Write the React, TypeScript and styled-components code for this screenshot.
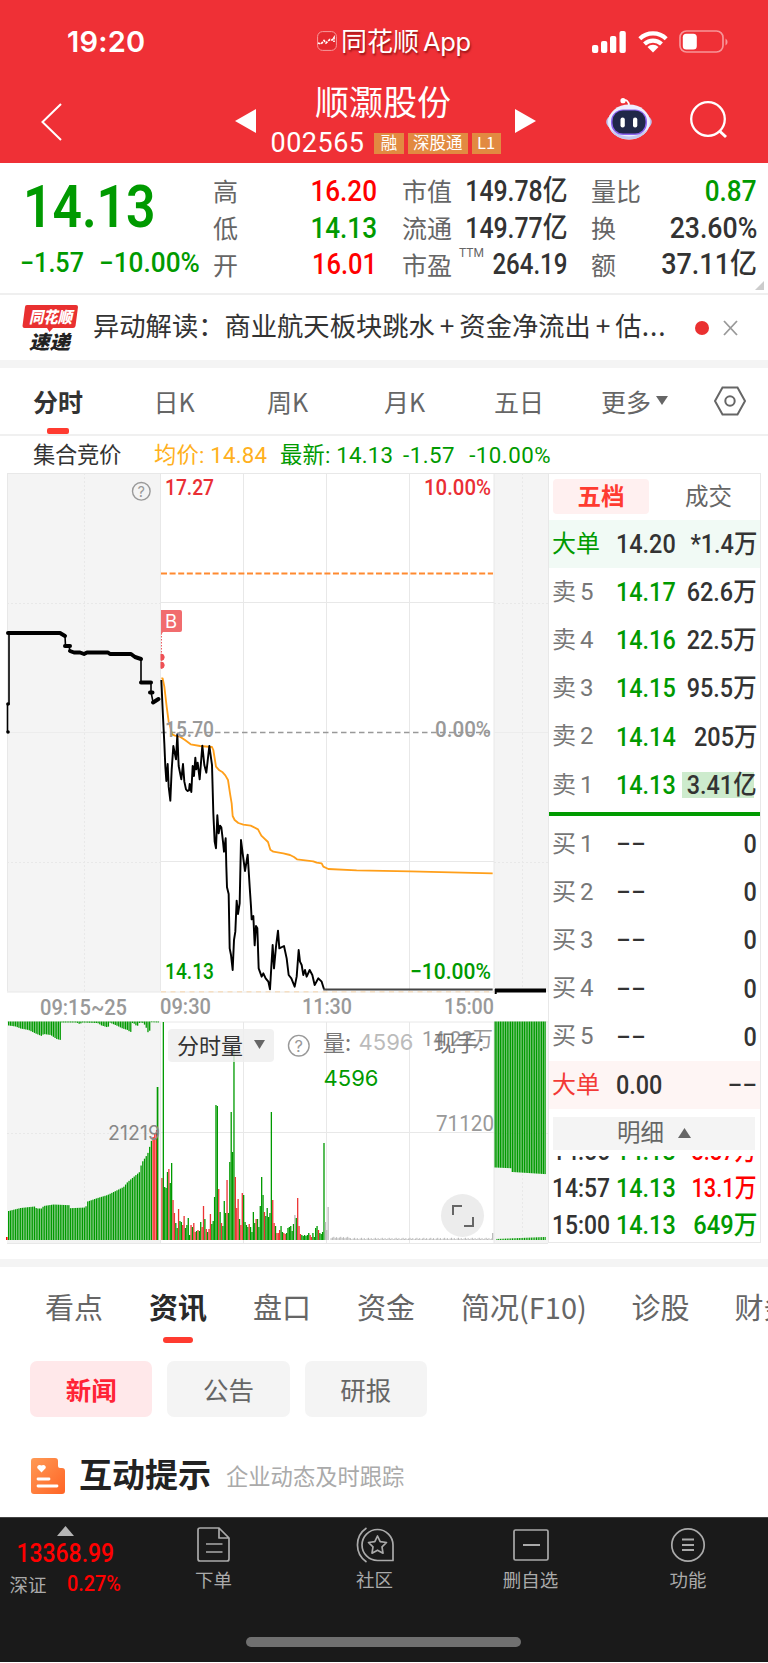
import React from "react";
import styled, { createGlobalStyle } from "styled-components";

const GREEN = "#009a00";
const RED = "#ff0000";
const SANS = `Roboto, "Noto Sans CJK SC", sans-serif`;
const CJK = `"Noto Sans CJK SC", sans-serif`;

const Global = createGlobalStyle`
  * { box-sizing: border-box; }
  body { margin: 0; background: #fff; font-family: ${CJK}; color: #333; }
`;

const Page = styled.div`
  width: 768px;
  height: 1663px;
  overflow: hidden;
  display: flex;
  flex-direction: column;
  background: #fff;
  white-space: nowrap;
`;

/* Condensed numerals */
const Num = styled.span<{ $size: number; $c?: string; $w?: number; $sx?: number; $o?: string }>`
  display: inline-block;
  font-family: ${SANS};
  font-size: ${(p) => p.$size}px;
  font-weight: ${(p) => p.$w ?? 500};
  line-height: 1.17;
  color: ${(p) => p.$c ?? "#333"};
  transform: scaleX(${(p) => p.$sx ?? 0.9});
  transform-origin: ${(p) => p.$o ?? "left"} center;
`;

/* ---------- Header ---------- */
const Header = styled.header`
  height: 163px;
  flex: none;
  background: #ef3036;
  color: #fff;
`;
const StatusBar = styled.div`
  height: 82px;
  display: grid;
  grid-template-columns: 317px 274px 1fr;
  padding-top: 2px;
  align-items: center;
`;
const Clock = styled.div`
  padding-left: 67px;
  font: 600 29px/34px Inter, sans-serif;
  letter-spacing: 0.2px;
`;
const AppName = styled.div`
  display: flex;
  align-items: center;
  gap: 4px;
  font-family: ${CJK};
  font-size: 26px;
  line-height: 34px;
  text-shadow: 1px 2px 2px rgba(90, 0, 0, 0.6);
  margin-top: -2px;
`;
const Latin = styled.span`
  margin-left: 4px;
  font-family: Inter, sans-serif;
  font-size: 25.5px;
  letter-spacing: -0.3px;
`;
const TitleBar = styled.div`
  height: 81px;
  display: grid;
  grid-template-columns: 235px 302px 1fr;
`;
const BackBox = styled.div`padding: 21px 0 0 41px;`;
const StockBox = styled.div`
  display: grid;
  grid-template-columns: 21px 1fr 22px;
  > svg { margin-top: 27px; }
`;
const StockTitle = styled.div`
  display: flex;
  flex-direction: column;
  align-items: center;
`;
const StockName = styled.div`
  margin: 0 0 0 -5px;
  font-size: 34px;
  line-height: 38px;
  font-weight: 400;
`;
const CodeLine = styled.div`
  display: flex;
  align-items: center;
  gap: 4px;
  margin-top: 12px;
  height: 22px;
  width: 230px;
`;
const Code = styled.span`
  font: 400 27px/24px Roboto, sans-serif;
  letter-spacing: 0.5px;
  width: 100px;
`;
const Tag = styled.span<{ $w: number }>`
  width: ${(p) => p.$w}px;
  height: 21px;
  background: #e28a41;
  text-align: center;
  font-size: 16.5px;
  line-height: 19px;
`;
const HeaderTools = styled.div`
  display: flex;
  gap: 37px;
  padding: 15px 0 0 68px;
`;

/* ---------- Quote ---------- */
const Quote = styled.section`
  height: 132px;
  flex: none;
  display: grid;
  grid-template-columns: 214px 163px 163px 163px;
  border-bottom: 2px solid #efefef;
  position: relative;
`;
const PriceBox = styled.div`
  padding-left: 23px;
`;
const BigPrice = styled.div`
  height: 70px;
  margin-top: 9px;
`;
const ChangeRow = styled.div`
  display: grid;
  grid-template-columns: 79px 1fr;
  margin: 6px 0 0 -3px;
`;
const StatCol = styled.div<{ $l: number; $w: number }>`
  margin-left: ${(p) => p.$l}px;
  width: ${(p) => p.$w}px;
  padding-top: 10px;
`;
const StatRow = styled.div`
  height: 36.7px;
  display: flex;
  align-items: center;
  justify-content: space-between;
  > :last-child { margin: 1px 0 0 -30px; }
`;
const StatLabel = styled.span`
  font-size: 25px;
  line-height: 36px;
  color: #666;
  position: relative;
  top: -1px;
  left: -1px;
  sup {
    position: absolute;
    left: 57px;
    top: 0;
    font: 400 12px/14px Roboto, sans-serif;
  }
`;
const Corner = styled.i`
  position: absolute;
  right: 4px;
  bottom: 3px;
  border-left: 9px solid transparent;
  border-bottom: 9px solid #ccc;
`;

/* ---------- News strip ---------- */
const NewsStrip = styled.section`
  height: 73px;
  flex: none;
  border-bottom: 8px solid #f4f4f4;
  display: flex;
  align-items: center;
  padding-left: 22px;
`;
const NewsText = styled.div`
  width: 572px;
  margin: -5px 0 0 15px;
  font-size: 26.3px;
  line-height: 40px;
`;
const PlusSign = styled.span`
  display: inline-block;
  width: 24.5px;
  text-align: center;
`;
const Dots = styled.span`
  letter-spacing: 1px;
`;
const Dot = styled.i`
  width: 14px;
  height: 14px;
  margin: 0 14px 0 30px;
  border-radius: 50%;
  background: #ea3030;
`;

/* ---------- Period tabs ---------- */
const PeriodTabs = styled.nav`
  height: 68px;
  flex: none;
  display: grid;
  grid-template-columns: 120.5px 113.5px 117px 110px 107px 112.5px 1fr;
  padding-left: 33px;
  border-bottom: 2px solid #f0f0f0;
`;
const PeriodTab = styled.div<{ $on?: boolean }>`
  position: relative;
  display: flex;
  align-items: center;
  height: 66px;
  font-size: 25px;
  line-height: 36px;
  padding-bottom: 1px;
  font-weight: ${(p) => (p.$on ? 700 : 400)};
  color: ${(p) => (p.$on ? "#333" : "#666")};
  &::after {
    content: ${(p) => (p.$on ? '""' : "none")};
    position: absolute;
    left: 14px;
    bottom: 0;
    width: 22px;
    height: 6px;
    border-radius: 2px;
    background: #ff3b30;
  }
`;
const MoreTab = styled(PeriodTab)`
  gap: 5px;
`;
const Legend = styled.div`
  height: 37px;
  flex: none;
  display: grid;
  grid-template-columns: 121px 126px 109px 1fr;
  padding: 1px 0 0 33px;
  font-family: ${SANS};
  font-size: 22.3px;
  line-height: 36px;
`;
const LegendItem = styled.span<{ $c?: string; $ls?: number }>`
  color: ${(p) => p.$c ?? "#333"};
  letter-spacing: ${(p) => p.$ls ?? 0.2}px;
`;
const Gap = styled.span`margin-left: 14px;`;

/* ---------- Market area ---------- */
const Market = styled.section`
  height: 794px;
  flex: none;
  display: grid;
  grid-template-columns: 548px 213px;
  border-bottom: 8px solid #f4f4f4;
`;
const ChartBox = styled.div`
  position: relative;
  height: 786px;
  svg { display: block; }
`;
const IndicatorMenu = styled.div`
  position: absolute;
  left: 168px;
  top: 556px;
  width: 106px;
  height: 33px;
  border-radius: 4px;
  background: rgba(238, 238, 238, 0.8);
  display: flex;
  align-items: center;
  gap: 11px;
  padding: 0 0 3px 9px;
  font-size: 22px;
  line-height: 30px;
`;
const ExpandButton = styled.div`
  position: absolute;
  left: 441px;
  top: 721px;
  width: 43px;
  height: 43px;
  border-radius: 50%;
  background: #ececec;
  display: grid;
  place-items: center;
`;

/* ---------- Order book ---------- */
const Book = styled.aside`
  height: 770px;
  border: 1px solid #e8e8e8;
  padding: 5px 0 0;
`;
const BookTabs = styled.div`
  display: grid;
  grid-template-columns: 96px 119px;
  margin-left: 4px;
  height: 41px;
`;
const BookTab = styled.div<{ $on?: boolean }>`
  height: 35px;
  border-radius: 4px;
  text-align: center;
  font-size: 23.5px;
  line-height: 32px;
  font-weight: ${(p) => (p.$on ? 700 : 400)};
  color: ${(p) => (p.$on ? "#ff3b30" : "#666")};
  background: ${(p) => (p.$on ? "#fff0f0" : "transparent")};
`;
const BookRow = styled.div<{ $bg?: string }>`
  height: 48.2px;
  display: grid;
  grid-template-columns: 64px 62px 1fr;
  align-items: center;
  padding: 0 3px;
  background: ${(p) => p.$bg ?? "transparent"};
  > :last-child { justify-self: end; }
`;
const BookLabel = styled.span<{ $c?: string }>`
  font-family: ${SANS};
  font-size: 24px;
  line-height: 34px;
  padding-bottom: 1px;
  color: ${(p) => p.$c ?? "#777"};
  word-spacing: -2px;
`;
const Amount = styled.span<{ $hot?: boolean }>`
  height: 26px;
  width: 75px;
  display: flex;
  align-items: center;
  justify-content: flex-end;
  background: ${(p) => (p.$hot ? "linear-gradient(to right, #cdebcd 72px, transparent 72px)" : "none")};
`;
const Divider = styled.div`
  height: 4px;
  margin: 3px 0 4px;
  background: ${GREEN};
`;
const DetailBar = styled.div`
  height: 33px;
  margin: 8px 5px 6px 4px;
  padding-bottom: 4px;
  background: #f4f4f4;
  display: flex;
  align-items: center;
  justify-content: center;
  gap: 14px;
  font-size: 23.5px;
  line-height: 29px;
  color: #666;
  svg { margin-top: 3px; }
`;
const Trades = styled.div`
  height: 89px;
  overflow: hidden;
  display: flex;
  flex-direction: column;
  justify-content: flex-end;
  padding-bottom: 1.5px;
`;
const TradeRow = styled.div`
  height: 37px;
  flex: none;
  display: grid;
  grid-template-columns: 64px 62px 1fr;
  align-items: center;
  padding: 0 3px;
  > :last-child { justify-self: end; }
`;

/* ---------- Content tabs ---------- */
const ContentTabs = styled.nav`
  height: 94px;
  flex: none;
  display: grid;
  grid-template-columns: 104px 104px 104px 104px 170.5px 103px 1fr;
  padding-left: 45px;
`;
const ContentTab = styled.div<{ $on?: boolean }>`
  position: relative;
  font-size: 29px;
  line-height: 40px;
  padding-top: 19px;
  font-weight: ${(p) => (p.$on ? 700 : 400)};
  color: ${(p) => (p.$on ? "#2a2a2a" : "#666")};
  &::after {
    content: ${(p) => (p.$on ? '""' : "none")};
    position: absolute;
    left: 18px;
    top: 70px;
    width: 30px;
    height: 6px;
    border-radius: 3px;
    background: #ff3b30;
    transform: translateX(-4px);
  }
`;
const Chips = styled.div`
  display: flex;
  gap: 15px;
  padding-left: 30px;
  height: 56px;
  flex: none;
`;
const Chip = styled.div<{ $on?: boolean }>`
  width: 122.3px;
  height: 56px;
  border-radius: 7px;
  text-align: center;
  font-size: 25.5px;
  line-height: 55px;
  font-weight: ${(p) => (p.$on ? 700 : 400)};
  color: ${(p) => (p.$on ? "#ff2436" : "#666")};
  background: ${(p) => (p.$on ? "#ffe8ea" : "#f4f4f4")};
`;
const Section = styled.section`
  flex: 1;
  display: flex;
  align-items: flex-start;
  padding: 41px 0 0 31px;
`;
const SectionTitle = styled.h2`
  margin: -8px 0 0 14px;
  font-size: 33px;
  line-height: 46px;
  font-weight: 700;
  color: #222;
`;
const SectionNote = styled.span`
  margin-left: 15px;
  font-size: 22.3px;
  line-height: 35px;
  color: #aaa;
`;

/* ---------- Bottom bar ---------- */
const BottomBar = styled.footer`
  height: 145px;
  flex: none;
  margin-bottom: 1px;
  background: #1a1a1a;
  border-top: 1px solid #444;
  display: grid;
  grid-template-columns: 130px 167px 155px 157px 158px;
  grid-template-rows: 119px 1fr;
`;
const IndexBox = styled.div`
  padding-top: 8px;
  display: flex;
  flex-direction: column;
  align-items: center;
`;
const IndexValue = styled.div`
  height: 31px;
  margin-top: 3px;
  font-size: 0;
`;
const IndexLine = styled.div`
  display: flex;
  width: 111px;
  align-items: center;
  justify-content: space-between;
  height: 28px;
  font-size: 18.5px;
  color: #aaa;
`;
const NavItem = styled.div`
  display: flex;
  flex-direction: column;
  align-items: center;
  padding-top: 8px;
  gap: 2px;
  font-size: 18.5px;
  line-height: 26px;
  color: #aaa;
`;
const HomeIndicator = styled.i`
  grid-column: 1 / -1;
  justify-self: center;
  width: 275px;
  height: 10px;
  border-radius: 5px;
  background: #707070;
`;

/* ---------- Chart data ---------- */
const BASE = 1240;

const interp = (pts: number[][], x: number) => {
  for (let i = 1; i < pts.length; i++) {
    if (x <= pts[i][0]) {
      const [x0, y0] = pts[i - 1];
      const [x1, y1] = pts[i];
      return y0 + ((y1 - y0) * (x - x0)) / (x1 - x0);
    }
  }
  return pts[pts.length - 1][1];
};

const auctionProfile = [
  [8, 29], [20, 32], [34, 33.5], [36, 31.5], [41, 31.5], [43, 34], [53, 35.5], [68.5, 34.8], [69.5, 31.8],
  [85, 32.5], [87, 38.5], [97, 42], [107, 45], [123, 53], [127, 58], [139, 68], [141, 77], [147, 86], [151, 100], [156, 110],
];
const topProfile = [
  [8, 4], [15, 5], [20, 7], [28, 8.5], [35, 12], [41, 14.5], [43, 12.5], [50, 13.5], [56, 17.5], [60, 18.5],
  [61, 1], [76, 1], [79, 2.5], [82, 1], [97, 1.5], [101, 4], [107.5, 6], [109, 1], [117, 4.5], [122, 7],
  [127, 8.5], [130, 11], [132, 0.7], [136.5, 5], [139, 1], [143, 1.5], [146, 7], [148.5, 14], [150, 0.7], [159, 1],
];

const volumes =
  "62r 218g 53g 52g 68g 71r 57g 77g 40r 27r 17g 12g 31r 19g 18g 15r 24r 12g 15g 22g 5g 15r 13g 17r 8r 9g 10r 9g 18g 13r 34r 21g 11r 8g 11r 26r 16g 19g 43g 135g 134g 51r 28g 17r 14g 39g 27g 60r 27g 78g 128g 88g 193g 63r 32r 41r 21g 15r 47r 45g 18g 15g 13g 16r 13g 8g 28g 17g 21r 21g 13g 34g 63g 45g 28r 24g 32g 23g 27g 128g 40r 17r 14g 7r 7r 10r 14g 8g 7r 6r 7g 12g 13g 14g 9g 16g 25n 22g 42r 14r 6r 5g 4g 5g 4g 5g 7g 5r 3r 7g 3g 12g 14g 10r 7g 6g 8g 97g 18n 10n 33n"
    .split(" ")
    .map((s) => ({ h: parseInt(s, 10), c: s[s.length - 1] }));
const tone: Record<string, string> = { r: "#ec3434", g: GREEN, n: "#bbb" };

const priceLine =
  "34,240 38,330 43,430 46,500 49,543 53,492 56,560 61,602 65,510 70,438 78,478 82,403 86,498 94,538 99,492 103,545 108,568 113,573 117,571 119,552 124,576 128,498 132,528 136,473 139,508 143,488 149,538 157,437 163,495 169,518 178,438 186,495 190,640 194,725 198,745 202,646 206,700 210,677 214,682 219,725 222,755 227,715 229,800 231,862 236,882 239,1045 243,1065 248,1110 252,1020 256,995 260,902 264,942 269,910 273,720 278,760 285,813 293,764 299,860 303,920 305,958 310,948 314,1036 318,978 322,985 326,1105 335,1130 340,1120 347,1135 355,1145 360,1168 364,1100 368,1035 372,1105 378,1040 384,992 388,1045 402,1038 410,1075 416,1125 424,1135 434,1160 440,1130 446,1050 450,1085 455,1095 460,1125 465,1110 470,1130 479,1110 487,1125 494,1155 505,1135 515,1145 522,1168";
const averageLine =
  "34,235 38,235 43,260 50,320 56,365 62,385 66,403 75,407 90,410 105,420 122,433 150,438 186,441 190,450 198,500 208,511 218,517 226,526 234,540 240,580 245,610 248,648 254,660 265,669 280,674 302,677 324,688 334,707 354,726 361,749 370,755 400,760 420,765 432,771 441,778 490,784 500,788 515,790 520,800 535,807 620,811 780,814 1028,820";

const auctionBars = Array.from({ length: 87 }, (_, i) => 8 + i * 1.72).filter((x) => x < 156);

const AxisText = ({ x, y, w, c, s = 22, end, wt = 500, children }: {
  x: number; y: number; w: number; c: string; s?: number; end?: boolean; wt?: number; children: string;
}) => (
  <text x={end ? x - w : x} y={y} fill={c} fontSize={s} fontWeight={wt} fontFamily={SANS} textLength={w} lengthAdjust="spacingAndGlyphs">
    {children}
  </text>
);

const Chart = () => (
  <svg width="548" height="786" viewBox="0 473 548 786">
    <rect x="7" y="473" width="153.5" height="519" fill="#f4f4f4" />
    <rect x="494" y="473" width="54" height="519" fill="#f4f4f4" />
    <rect x="7" y="1021" width="153.5" height="222" fill="#f4f4f4" />
    <rect x="494" y="1021" width="54" height="222" fill="#f4f4f4" />
    <g stroke="#e8e8e8" fill="none">
      <path d="M7 473.5H548M7 992H494M7 1022H548M7 1243.5H548" />
      <path d="M7.5 473V991M160.5 473V991M160.5 1022V1243M243.5 473V991M243.5 1022V1243M326.5 473V991M326.5 1022V1243M409.5 473V991M409.5 1022V1243M494 473V991M494 1022V1243" />
      <path d="M160 602.5H494M160 861.5H494M160 1132.5H494" />
      <path d="M7 603.5H160M7 862.5H160M7 1133.5H160M84.5 473V991M84.5 1022V1240M522.5 473V991M522.5 1022V1240M494 603.5H548M494 862.5H548M494 1133.5H548" strokeDasharray="2 2" />
      <path d="M7 732.5H160M494 732.5H548" stroke="#ececec" />
    </g>
    <path d="M161 991.8H494" stroke="#f5dfc4" strokeDasharray="5 4.5" strokeWidth="1.5" />
    <path d="M161 573.5H493" stroke="#ff8a30" strokeWidth="1.8" strokeDasharray="6 2.6" />
    <path d="M161 732.5H490" stroke="#999" strokeWidth="1.3" strokeDasharray="5.5 3.5" />

    <path d="M7.5 732V704H9V633H60L65 636L65.5 646H69L70 651L74 652L84 654L87 652H108L110 654H131L135 657L141 659V682H151V692L153 702L158 699" fill="none" stroke="#000" strokeWidth="1.6" />
    <path d="M8 633H60L65 636M65 646H70M70 651L74 652.5H80L84 654L87 652.5H108L110 654H131L135 657L141 659M141 682.5H151M150 692.5H152.5M153 702.5L158.5 699" fill="none" stroke="#000" strokeWidth="4" strokeLinecap="round" strokeLinejoin="round" />
    <circle cx="8" cy="704" r="1.8" /><circle cx="8" cy="732" r="1.8" />

    <g transform="translate(150 600) scale(.33333)" fill="none" strokeLinejoin="round">
      <polyline points={averageLine} stroke="#ff9f1a" strokeWidth="5.5" />
      <polyline points={priceLine} stroke="#000" strokeWidth="5.8" />
      <path d="M520 1168.500H1028" stroke="#444" strokeWidth="6" />
    </g>
    <path d="M495 990.5H546" stroke="#000" strokeWidth="4" />
    <path d="M495.7 989V994" stroke="#000" strokeWidth="2" />

    <path d="M161.5 633V654" stroke="#ee5c60" strokeDasharray="1.5 1.5" />
    <path d="M161 654a3.2 3.2 0 0 1 0 6.4zM161 662a3.2 3.2 0 0 1 0 6.4z" fill="#ee5055" stroke="#ee5055" />
    <path d="M161 610H180a2 2 0 0 1 2 2V630a2 2 0 0 1-2 2H163L161 635z" fill="#f16c6e" />
    <text x="165" y="627.5" fontSize="18.5" fill="#fff" fontFamily="Inter, sans-serif">B</text>

    <AxisText x={165} y={494.5} w={49} c="#ea2f35">17.27</AxisText>
    <AxisText x={491} y={494.5} w={67} c="#ea2f35" end>10.00%</AxisText>
    <AxisText x={165} y={736.5} w={49} c="#999">15.70</AxisText>
    <AxisText x={491} y={736.5} w={56} c="#999" end>0.00%</AxisText>
    <AxisText x={165} y={978.5} w={49} c={GREEN}>14.13</AxisText>
    <AxisText x={491} y={978.5} w={81} c={GREEN} end>−10.00%</AxisText>
    <AxisText x={40} y={1014.5} w={87} c="#999">09:15~25</AxisText>
    <AxisText x={160} y={1013.5} w={51} c="#999">09:30</AxisText>
    <AxisText x={302} y={1013.5} w={50} c="#999">11:30</AxisText>
    <AxisText x={494} y={1013.5} w={50} c="#999" end>15:00</AxisText>

    <g fill="none" stroke="#999" strokeWidth="1.4">
      <circle cx="141.3" cy="491.3" r="8.8" />
      <circle cx="298.8" cy="1045.7" r="10.3" />
    </g>
    <text x="141.3" y="496.5" fontSize="14.5" fill="#999" textAnchor="middle" fontFamily="Inter, sans-serif">?</text>
    <text x="298.8" y="1051.7" fontSize="16.5" fill="#999" textAnchor="middle" fontFamily="Inter, sans-serif">?</text>

    <rect x="6" y="1237" width="1.6" height="3" fill="red" />
    {auctionBars.map((x, i) => {
      const h = interp(auctionProfile, x);
      return <rect key={i} x={x} y={BASE - h} width="1.3" height={h} fill={x > 151 ? "#ff1a1a" : GREEN} />;
    })}
    {Array.from({ length: 88 }, (_, i) => 8 + i * 1.72).map((x, i) => (
      <rect key={i} x={x} y="1021.5" width="1.3" height={interp(topProfile, x)} fill={GREEN} />
    ))}
    <rect x="156.7" y="1087" width="1.7" height="153" fill={GREEN} />
    {volumes.map((v, i) => (
      <rect key={i} x={161.3 + i * 1.385} y={BASE - v.h} width="1.3" height={v.h} fill={tone[v.c]} />
    ))}
    {Array.from({ length: 117 }, (_, i) => (
      <rect key={i} x={330.5 + i * 1.385} y={BASE - 0.8 - ((i * 7) % 5) * 0.35 - (i < 14 ? 1 : 0)} width="1.1" height={0.8 + ((i * 7) % 5) * 0.35 + (i < 14 ? 1 : 0)} fill="#bbb" />
    ))}
    <rect x="492" y="1233" width="1.3" height="7" fill="#bbb" />
    {Array.from({ length: 30 }, (_, i) => {
      const x = 494.5 + i * 1.72;
      return (
        <g key={i} fill={GREEN}>
          <rect x={x} y="1021.5" width="1.35" height={i < 10 ? 146 + i * 0.08 : 150.5 + (i - 10) * 0.11} />
          <rect x={x + 0.2} y={1239 - i * 0.07} width="1.1" height={1 + i * 0.07} opacity={i < 1 ? 0 : 1} />
        </g>
      );
    })}
    <text x="108" y="1140" fontSize="19.5" fill="#888" fontFamily="Inter, sans-serif" textLength="52">21219</text>
    <AxisText x={494} y={1131} w={58} c="#999" wt={400} end>71120</AxisText>
    <AxisText x={493} y={1046} w={71} c="#999" wt={400} s={21} end>14.22万</AxisText>
    <text x="323" y="1050.5" fontSize="22" fill="#777" fontFamily={CJK}>量:</text>
    <text x="358.5" y="1050" fontSize="22" fill="#bbb" fontFamily="Inter, sans-serif" textLength="55">4596</text>
    <text x="434" y="1050.5" fontSize="22" fill="#777" fontFamily={CJK}>现手:</text>
    <text x="323.5" y="1085.5" fontSize="22" fill={GREEN} fontFamily="Inter, sans-serif" textLength="55">4596</text>
  </svg>
);

/* ---------- Icons ---------- */
const Robot = () => (
  <svg width="48" height="44" viewBox="0 0 48 44">
    <path d="M24 9C24 4 21 2 18 4" stroke="#fff" strokeWidth="1.8" fill="none" />
    <circle cx="18" cy="3.7" r="2.6" fill="#fff" />
    <ellipse cx="24" cy="25" rx="22.8" ry="11" fill="#bfc4ee" />
    <ellipse cx="24" cy="25" rx="21" ry="17.5" fill="#eeeefe" />
    <path d="M5 32Q24 47 43 32Q37 42.500 24 42.500T5 32Z" fill="#c5c9ef" />
    <rect x="6" y="12.5" width="36" height="25.5" rx="12" fill="#8b63ee" />
    <rect x="7.5" y="13.5" width="33" height="23" rx="10.5" fill="#202749" />
    <rect x="15.5" y="20.500" width="4.3" height="10" rx="2.1" fill="#fff" />
    <rect x="28" y="20.500" width="4.3" height="10" rx="2.1" fill="#fff" />
  </svg>
);

const Triangle = ({ w, h, up, c = "#666" }: { w: number; h: number; up?: boolean; c?: string }) => (
  <svg width={w} height={h} viewBox="0 0 10 10" preserveAspectRatio="none">
    <path d={up ? "M0 10H10L5 0Z" : "M0 0H10L5 10Z"} fill={c} />
  </svg>
);

const NewsBadge = () => (
  <svg width="56" height="50" viewBox="22 302 56 50">
    <path d="M27 304H76a2 2 0 0 1 2 2L75.500 325a2.500 2.500 0 0 1-2.500 2H53L49.500 331L47 327H24.500a2 2 0 0 1-2-2L25 306a2 2 0 0 1 2-2Z" fill="#e93030" />
    <text x="29" y="322" fontSize="16" fontWeight="900" fontStyle="italic" fill="#fff" fontFamily={CJK} textLength="43" lengthAdjust="spacingAndGlyphs">同花顺</text>
    <text x="29" y="347.500" fontSize="19" fontWeight="900" fontStyle="italic" fill="#222" fontFamily={CJK} textLength="41" lengthAdjust="spacingAndGlyphs">速递</text>
  </svg>
);

const NavIcon = ({ kind }: { kind: string }) => (
  <svg width="40" height="38" viewBox="0 0 40 38" fill="none" stroke="#aaa" strokeWidth="1.7" strokeLinejoin="round">
    {kind === "order" && <path d="M25 2H6a2 2 0 0 0-2 2V33a2 2 0 0 0 2 2H33a2 2 0 0 0 2-2V12ZM25 2V12H35M12 18H28.500M12 26H28.500" />}
    {kind === "community" && <path d="M11.500 2A20.500 20.500 0 0 0 11.500 36M38 34.500V19A15.500 15.500 0 1 0 22.500 34.500ZM22.500 10L25.200 15.700L31.500 16.500L27 20.900L28 27.200L22.500 24.200L17 27.200L18 20.900L13.500 16.500L19.800 15.700Z" />}
    {kind === "remove" && <><rect x="3" y="4" width="34" height="30" rx="1.500" /><path d="M12 19H29" strokeWidth="2" /></>}
    {kind === "menu" && <><circle cx="20" cy="19" r="16.200" /><path d="M14 13.500H26M14 19H26M14 24H26" strokeWidth="2" /></>}
  </svg>
);

type Stat = { label: string; value: string; color?: string; sx: number };
const stats: Stat[][] = [
  [
    { label: "高", value: "16.20", color: RED, sx: 0.9 },
    { label: "低", value: "14.13", color: GREEN, sx: 0.9 },
    { label: "开", value: "16.01", color: RED, sx: 0.88 },
  ],
  [
    { label: "市值", value: "149.78亿", sx: 0.855 },
    { label: "流通", value: "149.77亿", sx: 0.855 },
    { label: "市盈", value: "264.19", sx: 0.83 },
  ],
  [
    { label: "量比", value: "0.87", color: GREEN, sx: 0.9 },
    { label: "换", value: "23.60%", sx: 0.92 },
    { label: "额", value: "37.11亿", sx: 0.93 },
  ],
];
const asks = [["5", "14.17", "62.6万"], ["4", "14.16", "22.5万"], ["3", "14.15", "95.5万"], ["2", "14.14", "205万"], ["1", "14.13", "3.41亿"]];
const trades: [string, string, string, string, number][] = [
  ["14:56", "14.13", "3.37万", RED, 0.84],
  ["14:57", "14.13", "13.1万", RED, 0.84],
  ["15:00", "14.13", "649万", GREEN, 0.91],
];

export default function App() {
  return (
    <Page>
      <Global />
      <Header>
        <StatusBar>
          <Clock>19:20</Clock>
          <AppName>
            <svg width="20" height="20" viewBox="0 0 20 20">
              <rect x=".6" y=".6" width="18.800" height="18.800" rx="5" fill="#e5282e" stroke="#f79a9c" />
              <path d="M1 12L4 13L7 9.500L9 12L11 10L13 8.500L15 9L17 6.500V11" fill="none" stroke="#fff" strokeWidth="1.700" strokeDasharray="2.500 1" />
            </svg>
            <span>同花顺<Latin>App</Latin></span>
          </AppName>
          <svg width="140" height="24" viewBox="591 30 140 24">
            <g fill="#fff">
              <rect x="592" y="45" width="6.300" height="8" rx="2" /><rect x="601" y="41" width="6.300" height="12" rx="2" />
              <rect x="610" y="36" width="6.300" height="17" rx="2" /><rect x="619.500" y="31" width="6.300" height="22" rx="2" />
              <path d="M653 52.500L647.500 47A8 8 0 0 1 658.500 47Z" />
            </g>
            <path d="M639.800 38.800A19 19 0 0 1 666.200 38.800M644.500 44A12.500 12.500 0 0 1 661.500 44" fill="none" stroke="#fff" strokeWidth="4.200" />
            <rect x="680" y="31" width="43" height="21" rx="6.500" fill="none" stroke="#f79598" strokeWidth="1.700" />
            <rect x="682.800" y="33.800" width="14" height="15.600" rx="3.500" fill="#fff" />
            <path d="M725.500 38.500a4 4 0 0 1 0 7z" fill="#f79598" />
          </svg>
        </StatusBar>
        <TitleBar>
          <BackBox>
            <svg width="22" height="38" viewBox="0 0 22 38"><path d="M20 1L1.500 19L20 37" fill="none" stroke="#fff" strokeWidth="2" /></svg>
          </BackBox>
          <StockBox>
            <svg width="21" height="24"><path d="M0 12L21 0V24Z" fill="#fff" /></svg>
            <StockTitle>
              <StockName>顺灏股份</StockName>
              <CodeLine>
                <Code>002565</Code>
                <Tag $w={30}>融</Tag><Tag $w={60}>深股通</Tag><Tag $w={29}>L1</Tag>
              </CodeLine>
            </StockTitle>
            <svg width="22" height="24"><path d="M21 12L0 0V24Z" fill="#fff" /></svg>
          </StockBox>
          <HeaderTools>
            <Robot />
            <svg width="40" height="42" viewBox="0 0 40 42" fill="none" stroke="#fff" strokeWidth="2.300"><circle cx="18" cy="22" r="16.800" /><path d="M29.500 34L36 40" strokeWidth="3" /></svg>
          </HeaderTools>
        </TitleBar>
      </Header>

      <Quote>
        <PriceBox>
          <BigPrice><Num $size={60} $c={GREEN} $sx={0.86} $w={600}>14.13</Num></BigPrice>
          <ChangeRow>
            <Num $size={27} $c={GREEN} $sx={0.93}>−1.57</Num>
            <Num $size={27} $c={GREEN} $sx={0.97}>−10.00%</Num>
          </ChangeRow>
        </PriceBox>
        {stats.map((col, i) => (
          <StatCol key={i} $l={[0, 26, 52][i]} $w={[163, 164, 165][i]}>
            {col.map((s) => (
              <StatRow key={s.label}>
                <StatLabel>{s.label}{s.label === "市盈" && <sup>TTM</sup>}</StatLabel>
                <Num $size={29} $c={s.color} $o="right" $sx={s.sx}>{s.value}</Num>
              </StatRow>
            ))}
          </StatCol>
        ))}
        <Corner />
      </Quote>

      <NewsStrip>
        <NewsBadge />
        <NewsText>异动解读：商业航天板块跳水<PlusSign>+</PlusSign>资金净流出<PlusSign>+</PlusSign>估<Dots>...</Dots></NewsText>
        <Dot />
        <svg width="15" height="16" viewBox="0 0 15 16"><path d="M1 1L14 15M14 1L1 15" stroke="#999" strokeWidth="1.800" /></svg>
      </NewsStrip>

      <PeriodTabs>
        <PeriodTab $on>分时</PeriodTab>
        <PeriodTab>日K</PeriodTab>
        <PeriodTab>周K</PeriodTab>
        <PeriodTab>月K</PeriodTab>
        <PeriodTab>五日</PeriodTab>
        <MoreTab>更多<Triangle w={12} h={9} /></MoreTab>
        <PeriodTab>
          <svg width="32" height="30" viewBox="0 0 32 30" fill="none" stroke="#666" strokeWidth="2"><path d="M8.500 1.500H23.500L31 15L23.500 28.500H8.500L1 15Z" /><circle cx="16" cy="15" r="4.700" /></svg>
        </PeriodTab>
      </PeriodTabs>
      <Legend>
        <LegendItem $ls={-0.3}>集合竞价</LegendItem>
        <LegendItem $c="#ffb020">均价: 14.84</LegendItem>
        <LegendItem $c={GREEN}>最新: 14.13</LegendItem>
        <LegendItem $c={GREEN} $ls={0.5}><Gap>-1.57</Gap><Gap>-10.00%</Gap></LegendItem>
      </Legend>

      <Market>
        <ChartBox>
          <Chart />
          <IndicatorMenu>分时量<Triangle w={11} h={9} /></IndicatorMenu>
          <ExpandButton>
            <svg width="22" height="22" viewBox="0 0 22 22" fill="none" stroke="#666" strokeWidth="2"><path d="M1 10V1H10M12 21H21V12" /></svg>
          </ExpandButton>
        </ChartBox>
        <Book>
          <BookTabs><BookTab $on>五档</BookTab><BookTab>成交</BookTab></BookTabs>
          <BookRow $bg="#f1faf5">
            <BookLabel $c={GREEN}>大单</BookLabel><Num $size={26}>14.20</Num><Num $size={26} $o="right">*1.4万</Num>
          </BookRow>
          {asks.map(([n, p, q]) => (
            <BookRow key={n}>
              <BookLabel>卖 {n}</BookLabel><Num $size={26} $c={GREEN}>{p}</Num>
              <Amount $hot={n === "1"}><Num $size={26} $o="right">{q}</Num></Amount>
            </BookRow>
          ))}
          <Divider />
          {[1, 2, 3, 4, 5].map((n) => (
            <BookRow key={n}>
              <BookLabel>买 {n}</BookLabel><Num $size={26} $sx={1.02}>−−</Num><Num $size={26} $o="right">0</Num>
            </BookRow>
          ))}
          <BookRow $bg="#fef5f4">
            <BookLabel $c="#f33a36">大单</BookLabel><Num $size={26}>0.00</Num><Num $size={26} $sx={1.02} $o="right">−−</Num>
          </BookRow>
          <DetailBar>明细<Triangle w={13} h={10} up /></DetailBar>
          <Trades>
            {trades.map(([t, p, q, c, sx]) => (
              <TradeRow key={t}>
                <Num $size={26} $sx={0.88}>{t}</Num><Num $size={26} $c={GREEN}>{p}</Num><Num $size={26} $c={c} $o="right" $sx={sx}>{q}</Num>
              </TradeRow>
            ))}
          </Trades>
        </Book>
      </Market>

      <ContentTabs>
        {["看点", "资讯", "盘口", "资金", "简况(F10)", "诊股", "财务"].map((t) => (
          <ContentTab key={t} $on={t === "资讯"}>{t}</ContentTab>
        ))}
      </ContentTabs>
      <Chips>
        <Chip $on>新闻</Chip><Chip>公告</Chip><Chip>研报</Chip>
      </Chips>
      <Section>
        <svg width="34" height="36" viewBox="0 0 34 36">
          <defs><linearGradient id="doc" x1="0" y1="0" x2="1" y2="1"><stop offset="0" stopColor="#ff9a55" /><stop offset="1" stopColor="#ff6425" /></linearGradient></defs>
          <path d="M3 0H24a3 3 0 0 1 3 3V8a2 2 0 0 0 2 2H31a3 3 0 0 1 3 3V33a3 3 0 0 1-3 3H3a3 3 0 0 1-3-3V3a3 3 0 0 1 3-3Z" fill="url(#doc)" />
          <path d="M10.500 14.500L6.200 10A2.700 2.700 0 0 1 10.500 7.500A2.700 2.700 0 0 1 14.800 10Z" fill="#fff" />
          <path d="M7 21H18M7 28H26" stroke="#fff" strokeWidth="2.800" strokeLinecap="round" />
        </svg>
        <SectionTitle>互动提示</SectionTitle>
        <SectionNote>企业动态及时跟踪</SectionNote>
      </Section>

      <BottomBar>
        <IndexBox>
          <Triangle w={17} h={10} up c="#b5b5b5" />
          <IndexValue><Num $size={25.5} $c={RED} $w={500} $o="center" $sx={0.9}>13368.99</Num></IndexValue>
          <IndexLine>深证<Num $size={22} $c={RED} $w={500} $o="right" $sx={0.9}>0.27%</Num></IndexLine>
        </IndexBox>
        <NavItem><NavIcon kind="order" />下单</NavItem>
        <NavItem><NavIcon kind="community" />社区</NavItem>
        <NavItem><NavIcon kind="remove" />删自选</NavItem>
        <NavItem><NavIcon kind="menu" />功能</NavItem>
        <HomeIndicator />
      </BottomBar>
    </Page>
  );
}
